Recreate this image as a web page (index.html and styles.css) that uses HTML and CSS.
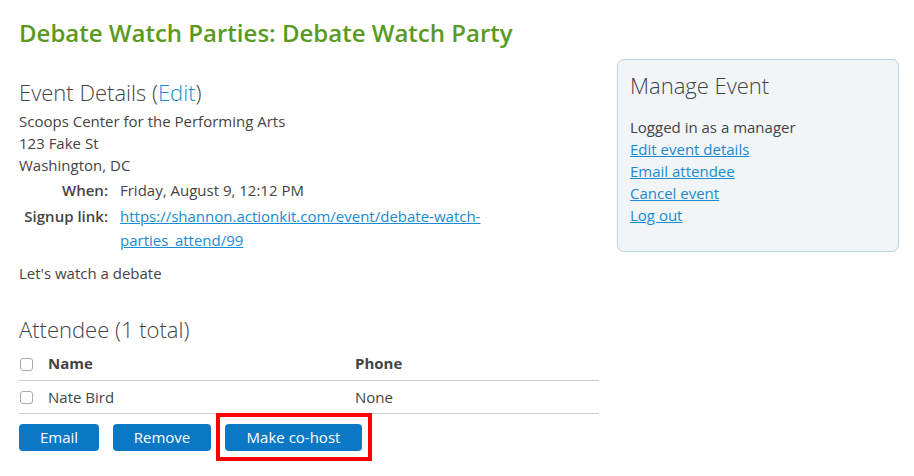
FILE: index.html
```html
<!DOCTYPE html>
<html>
<head>
<meta charset="utf-8">
<link rel="stylesheet" href="styles.css">
</head>
<body>
<div class="page">
  <h1 class="title">Debate Watch Parties: Debate Watch Party</h1>
  <div class="cols">
    <div class="main">
      <h2 class="section-h">Event Details (<a href="#" class="plain-link">Edit</a>)</h2>
      <div class="address">
        <div>Scoops Center for the Performing Arts</div>
        <div>123 Fake St</div>
        <div>Washington, DC</div>
      </div>
      <div class="details">
        <div class="dt">When:</div>
        <div class="dd">Friday, August 9, 12:12 PM</div>
        <div class="dt">Signup link:</div>
        <div class="dd"><a href="#" class="link">https://shannon.actionkit.com/event/debate-watch-parties_attend/99</a></div>
      </div>
      <p class="desc">Let's watch a debate</p>
      <h2 class="section-h att-h">Attendee (1 total)</h2>
      <table class="att">
        <thead>
          <tr><th class="cb-cell"><span class="cb"></span></th><th class="name-col">Name</th><th>Phone</th></tr>
        </thead>
        <tbody>
          <tr><td class="cb-cell"><span class="cb"></span></td><td>Nate Bird</td><td>None</td></tr>
        </tbody>
      </table>
      <div class="actions">
        <button class="btn btn-email">Email</button>
        <button class="btn btn-remove">Remove</button>
        <span class="highlight"><button class="btn btn-cohost">Make co-host</button></span>
      </div>
    </div>
    <aside class="manage">
      <h2 class="manage-h">Manage Event</h2>
      <div class="manage-body">
        <div>Logged in as a manager</div>
        <div><a href="#" class="link">Edit event details</a></div>
        <div><a href="#" class="link">Email attendee</a></div>
        <div><a href="#" class="link">Cancel event</a></div>
        <div><a href="#" class="link">Log out</a></div>
      </div>
    </aside>
  </div>
</div>
</body>
</html>
```
FILE: styles.css
```css
* { box-sizing: border-box; }
html, body { margin: 0; padding: 0; background: #fff; }
body {
  font-family: "Open Sans", "Liberation Sans", sans-serif;
  font-size: 15px;
  line-height: 22px;
  color: #444;
}
.page { padding: 17px 15px 25px 19px; min-height: 476px; }
.title {
  margin: 0;
  font-size: 24px;
  line-height: 32px;
  font-weight: 600;
  color: #5a9a23;
}
.cols {
  display: flex;
  gap: 18px;
  margin-top: 10px;
}
.main { width: 580px; }
.section-h {
  margin: 0;
  font-size: 22px;
  line-height: 30px;
  font-weight: 300;
  color: #444;
}
.main > .section-h:first-child { margin-top: 18px; }
.plain-link { color: #1a8ad3; text-decoration: none; }
.link { color: #1a8ad3; text-decoration: underline; }
.address { margin-top: 3px; }
.details {
  display: grid;
  grid-template-columns: 89px 400px;
  column-gap: 12px;
  row-gap: 2px;
  line-height: 24px;
  margin-top: 2px;
}
.dt { text-align: right; font-weight: 600; }
.desc { margin: 10px 0 0; }
.att-h { margin-top: 30px; }
.att {
  width: 100%;
  border-collapse: collapse;
  margin-top: 3px;
}
.att th, .att td {
  text-align: left;
  padding: 0;
  height: 33px;
  border-bottom: 1px solid #ccc;
  vertical-align: middle;
}
.att th { font-weight: 700; }
.cb-cell { width: 29px; }
.name-col { width: 307px; }
.cb {
  display: inline-block;
  width: 13px;
  height: 13px;
  border: 1px solid #aaa;
  border-radius: 3px;
  vertical-align: middle;
  margin-left: 1px;
  margin-top: -2px;
}
.actions {
  display: flex;
  align-items: center;
  gap: 14px;
  margin-top: 10px;
}
.btn {
  font-family: inherit;
  font-size: 15px;
  line-height: 27px;
  height: 27px;
  padding: 0;
  border: 0;
  border-radius: 4px;
  background: #0b78c6;
  color: #fff;
  cursor: pointer;
}
.btn-email { width: 80px; }
.btn-remove { width: 98px; }
.btn-cohost { width: 137px; }
.highlight {
  display: inline-flex;
  padding: 7px 6px 6px 5px;
  border: 4px solid #f00;
  margin: -11px 0 -10px -9px;
}
.manage {
  width: 282px;
  align-self: flex-start;
  background: #f1f5f7;
  border: 1px solid #bdd5db;
  border-radius: 7px;
  padding: 10px 12px 25px;
}
.manage-h {
  margin: 0;
  font-size: 22px;
  line-height: 30px;
  font-weight: 300;
  color: #444;
}
.manage-body { margin-top: 16px; }
```
